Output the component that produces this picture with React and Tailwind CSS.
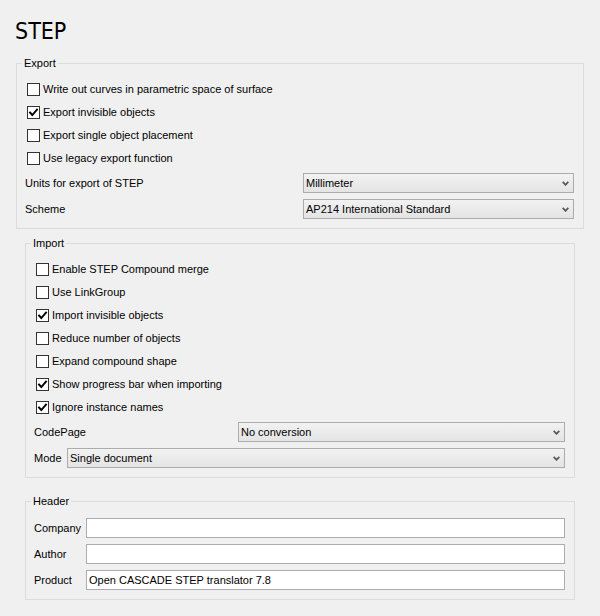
import React from "react";

function Check({ checked }) {
  return (
    <span className="w-[13px] h-[13px] shrink-0 border border-[#333333] bg-white flex items-center justify-center">
      {checked && (
        <svg width="11" height="11" viewBox="0 0 11 11">
          <path d="M2 5.5 L4.3 8 L9 2.5" stroke="#000" strokeWidth="1.9" fill="none" strokeLinecap="square" />
        </svg>
      )}
    </span>
  );
}

function CheckRow({ checked, children }) {
  return (
    <div className="h-[23px] flex items-center pl-[10px] gap-[3px]">
      <Check checked={checked} />
      <span>{children}</span>
    </div>
  );
}

function Chevron() {
  return (
    <svg width="7" height="5" viewBox="0 0 7 5" className="shrink-0">
      <path d="M0.7 0.8 L3.5 3.8 L6.3 0.8" stroke="#5a5a5a" strokeWidth="1.8" fill="none" />
    </svg>
  );
}

function Combo({ children }) {
  return (
    <div className="flex-1 h-[20px] border border-[#acacac] bg-linear-to-b from-[#f2f2f2] to-[#e4e4e4] flex items-center pl-[2px] pr-[4px]">
      <span className="flex-1">{children}</span>
      <Chevron />
    </div>
  );
}

function Input({ children }) {
  return (
    <div className="flex-1 h-[20px] border border-[#abadb3] bg-white flex items-center pl-[2px]">
      {children}
    </div>
  );
}

function Legend({ children }) {
  return <legend className="ml-[5px] px-[2px] leading-[13px] h-[13px]">{children}</legend>;
}

export default function App() {
  return (
    <div className="w-[600px] h-[616px] bg-[#f0f0f0] pt-[17px] text-[11px] text-black font-['Liberation_Sans',Arial,sans-serif] overflow-hidden">
      <div className="h-[28px] leading-[28px] pl-[15px] text-[23px] font-['DejaVu_Sans_Condensed','Liberation_Sans',sans-serif]">
        STEP
      </div>

      <fieldset className="mt-[12px] mx-[16px] border border-[#dcdcdc] pt-[8px] pb-[9px] pr-[9px]">
        <Legend>Export</Legend>
        <CheckRow>Write out curves in parametric space of surface</CheckRow>
        <CheckRow checked>Export invisible objects</CheckRow>
        <CheckRow>Export single object placement</CheckRow>
        <CheckRow>Use legacy export function</CheckRow>
        <div className="mt-[3px] flex flex-col gap-[6px]">
          <div className="flex items-center pl-[8px]">
            <span className="w-[278px]">Units for export of STEP</span>
            <Combo>Millimeter</Combo>
          </div>
          <div className="flex items-center pl-[8px]">
            <span className="w-[278px]">Scheme</span>
            <Combo>AP214 International Standard</Combo>
          </div>
        </div>
      </fieldset>

      <fieldset className="mt-[8px] mx-[25px] border border-[#dcdcdc] pt-[8px] pb-[9px] pr-[9px]">
        <Legend>Import</Legend>
        <CheckRow>Enable STEP Compound merge</CheckRow>
        <CheckRow>Use LinkGroup</CheckRow>
        <CheckRow checked>Import invisible objects</CheckRow>
        <CheckRow>Reduce number of objects</CheckRow>
        <CheckRow>Expand compound shape</CheckRow>
        <CheckRow checked>Show progress bar when importing</CheckRow>
        <CheckRow checked>Ignore instance names</CheckRow>
        <div className="mt-[3px] flex flex-col gap-[6px]">
          <div className="flex items-center pl-[8px]">
            <span className="w-[204px]">CodePage</span>
            <Combo>No conversion</Combo>
          </div>
          <div className="flex items-center pl-[8px]">
            <span className="w-[33px]">Mode</span>
            <Combo>Single document</Combo>
          </div>
        </div>
      </fieldset>

      <fieldset className="mt-[17px] mx-[25px] border border-[#dcdcdc] pt-[10px] pb-[9px] pr-[9px]">
        <Legend>Header</Legend>
        <div className="flex flex-col gap-[6px]">
          <div className="flex items-center pl-[8px]">
            <span className="w-[52px]">Company</span>
            <Input />
          </div>
          <div className="flex items-center pl-[8px]">
            <span className="w-[52px]">Author</span>
            <Input />
          </div>
          <div className="flex items-center pl-[8px]">
            <span className="w-[52px]">Product</span>
            <Input>Open CASCADE STEP translator 7.8</Input>
          </div>
        </div>
      </fieldset>
    </div>
  );
}
